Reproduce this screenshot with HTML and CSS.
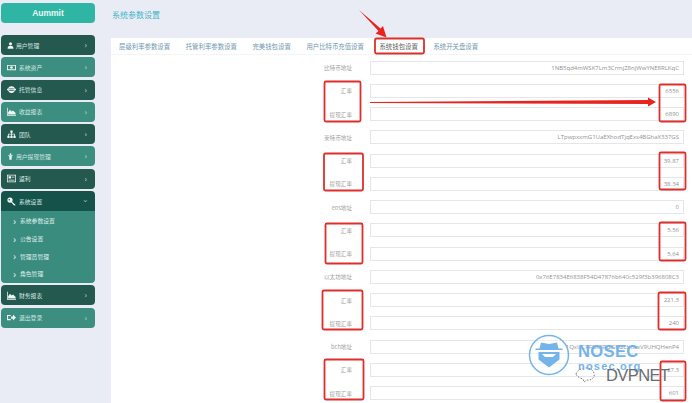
FILE: index.html
```html
<!DOCTYPE html>
<html lang="zh">
<head>
<meta charset="utf-8">
<title>系统参数设置</title>
<link rel="stylesheet" href="styles.css">
</head>
<body>
<div class="page">
  <aside class="sidebar">
    <div class="logo">Aummit</div>
    <nav class="menu">
      <a class="item dark"><svg class="ico narrow" viewBox="0 0 12 12"><circle cx="6" cy="3.2" r="2.6"/><path d="M1 11.5c0-4 2-5 5-5s5 1 5 5z"/></svg><span class="lbl">用户管理</span><span class="chev">›</span></a>
      <a class="item light"><svg class="ico" viewBox="0 0 12 12"><path d="M0 2.5h12v7H0zM1.2 3.7v4.6h9.600V3.700z" fill-rule="evenodd"/><circle cx="6" cy="6" r="1.800"/></svg><span class="lbl">系统资产</span><span class="chev">›</span></a>
      <a class="item dark"><svg class="ico" viewBox="0 0 12 12"><path d="M6 1.500a4.500 4.500 0 1 0 0 9 4.500 4.500 0 0 0 0-9zM3 4.500h6v1H3zM3 6.500h6v1H3z" fill-rule="evenodd"/><path d="M0 5h2v2H0zM10 5h2v2h-2z"/></svg><span class="lbl">托管信息</span><span class="chev">›</span></a>
      <a class="item light"><svg class="ico" viewBox="0 0 12 12"><path d="M0 1h1v9.500h11V11.500H0zM1.500 10V7l2.500-3.500L6 6l2-1.500L11.500 8v2z"/></svg><span class="lbl">收益报表</span><span class="chev">›</span></a>
      <a class="item dark"><svg class="ico" viewBox="0 0 12 12"><path d="M4.500 0.500h3v3h-1v1.500h4v2.500h1v3h-3v-3h1V6h-3v1.500h1v3h-3v-3h1V6h-3v1.500h1v3h-3v-3h1V5h4V3.500h-1z"/></svg><span class="lbl">团队</span><span class="chev">›</span></a>
      <a class="item light"><svg class="ico narrow" viewBox="0 0 12 12"><circle cx="6" cy="2" r="1.500"/><path d="M1.500 4h9L8 6v5.500H4V6z"/></svg><span class="lbl">用户提现管理</span><span class="chev">›</span></a>
      <a class="item dark"><svg class="ico" viewBox="0 0 12 12"><path d="M0 1h12v10H0zM1 2v8h10V2z" fill-rule="evenodd"/><path d="M2 3h3.500v3H2zM6.500 3.500H10v1H6.500zM2 7.500h8v1H2z"/></svg><span class="lbl">返利</span><span class="chev">›</span></a>
      <div class="group">
        <a class="item active"><svg class="ico" viewBox="0 0 12 12"><path d="M4 .5a3.500 3.500 0 1 0 0 7 3.500 3.500 0 0 0 0-7zM3 2.500a1 1 0 1 1 0 2 1 1 0 0 1 0-2z" fill-rule="evenodd"/><path d="M6.500 6l5 4.500-1 1L9.500 10.500l-1 .5-.5-1.500-2.500-2.500z"/></svg><span class="lbl">系统设置</span><span class="chev down">›</span></a>
        <div class="sub">
          <a class="subitem"><span class="arrow">›</span>系统参数设置</a>
          <a class="subitem"><span class="arrow">›</span>公告设置</a>
          <a class="subitem"><span class="arrow">›</span>管理员管理</a>
          <a class="subitem"><span class="arrow">›</span>角色管理</a>
        </div>
      </div>
      <a class="item dark"><svg class="ico" viewBox="0 0 12 12"><path d="M0 1h1v9.500h11V11.500H0zM1.500 10V7l2.500-3.500L6 6l2-1.500L11.500 8v2z"/></svg><span class="lbl">财务报表</span><span class="chev">›</span></a>
      <a class="item light"><svg class="ico" viewBox="0 0 12 12"><path d="M0 2.500h5v1.500H1.500v4H5v1.500H0zM5.500 4.500H8V2l4 4-4 4V7.500H5.500z"/></svg><span class="lbl">退出登录</span><span class="chev">›</span></a>
    </nav>
  </aside>
  <main class="main">
    <header class="head">系统参数设置</header>
    <section class="panel">
      <div class="tabs">
        <span class="tab">层级利率参数设置</span>
        <span class="tab">托管利率参数设置</span>
        <span class="tab">完美钱包设置</span>
        <span class="tab">用户比特币充值设置</span>
        <span class="tab current">系统钱包设置</span>
        <span class="tab">系统开关盘设置</span>
      </div>
      <form class="form">
        <label class="label">比特币地址</label><div class="field">1NB5qd4mWSK7Lm3CrmjZ8njWwYNE8RLKqC</div>
        <label class="label">汇率</label><div class="field">6556</div>
        <label class="label">提现汇率</label><div class="field">6890</div>
        <label class="label">莱特币地址</label><div class="field">LTpwpxxmG1UaEXhodTjqExs4BGhaX337GS</div>
        <label class="label">汇率</label><div class="field">39.87</div>
        <label class="label">提现汇率</label><div class="field">38.34</div>
        <label class="label">eos地址</label><div class="field">0</div>
        <label class="label">汇率</label><div class="field">5.56</div>
        <label class="label">提现汇率</label><div class="field">5.64</div>
        <label class="label">以太坊地址</label><div class="field">0x76E7834E6838F54D47876b640c529f3b396808C3</div>
        <label class="label">汇率</label><div class="field">221.3</div>
        <label class="label">提现汇率</label><div class="field">240</div>
        <label class="label">bch地址</label><div class="field">1QxUCRFBxBPGGbGEbfxwV9UHQHenP4</div>
        <label class="label">汇率</label><div class="field">27.3</div>
        <label class="label">提现汇率</label><div class="field">601</div>
      </form>
    </section>
  </main>

  <svg class="marks" viewBox="0 0 692 403">
    <g class="boxes">
      <rect x="375" y="38.500" width="49" height="15" rx="1.500"/>
      <rect x="324.500" y="81.500" width="36" height="40" rx="1.500"/>
      <rect x="659.500" y="84.500" width="26" height="37" rx="1.500"/>
      <rect x="324" y="153.500" width="39" height="37" rx="1.500"/>
      <rect x="659.500" y="152.500" width="26" height="37" rx="1.500"/>
      <rect x="325.500" y="223.500" width="37" height="40" rx="1.500"/>
      <rect x="659.500" y="222.500" width="26" height="38" rx="1.500"/>
      <rect x="322.500" y="290.500" width="40" height="39" rx="1.500"/>
      <rect x="658.500" y="292.500" width="27" height="37" rx="1.500"/>
      <rect x="324.500" y="359.500" width="39" height="40" rx="1.500"/>
      <rect x="660.500" y="361.500" width="25" height="39" rx="1.500"/>
    </g>
    <polygon class="arrow-fill" points="370,102 648,100 648,97.500 656,102 648,106.500 648,104 370,103"/>
    <polygon class="arrow-fill" points="359,10 380.500,28.500 383,26 386.500,37.500 375.500,33.500 378.500,31"/>
    <g class="seal">
      <circle class="seal-ring" cx="549" cy="355" r="19.500"/>
      <path class="seal-fill" d="M541 342.500l8 1.500 8-1.500 1.500 6h4v1.500h-27v-1.500h4zM538.500 352h21v7.500l-10.500 8-10.500-8z"/>
      <path class="seal-gap" d="M542 354h14l-3 3h-8z"/>
    </g>
    <g class="chat">
      <path class="chat-line" d="M576 374c2-6 11-8 16-4 5 5 1 11-5 10l-3 2-1-3c-3-1-6-2-7-5z"/>
    </g>
  </svg>
  <div class="watermark">
    <div class="wm-name">NOSEC</div>
    <div class="wm-site">nosec.org</div>
    <div class="wm-net">DVPNET</div>
  </div>
</div>
</body>
</html>
```

FILE: styles.css
```css
* { box-sizing: border-box; }
html, body { margin: 0; padding: 0; }
body {
  width: 692px;
  height: 403px;
  overflow: hidden;
  background: #e9ecf5;
  font-family: "Noto Sans CJK SC", "Noto Sans", sans-serif;
}
.page { position: relative; display: flex; width: 692px; height: 403px; }

.sidebar { width: 111px; flex: none; padding: 3px 16px 0 1px; }
.logo {
  height: 20px;
  line-height: 20px;
  border-radius: 4px;
  background: #2fb5a4;
  color: #e8f8f5;
  text-align: center;
  font-family: "Liberation Sans", sans-serif;
  font-size: 8.500px;
  font-weight: 700;
}
.menu { display: flex; flex-direction: column; gap: 2.300px; margin-top: 12px; }
.item {
  display: flex;
  align-items: center;
  height: 20px;
  padding: 0 8px 0 6px;
  border-radius: 4px;
  color: #d5e6e2;
  font-size: 5.800px;
}
.dark { background: #24594f; }
.light { background: #3b8e80; }
.active { background: #15534a; border-radius: 4px 4px 0 0; }
.ico { width: 9px; height: 9px; flex: none; margin-right: 3px; fill: #eef6f4; }
.narrow { width: 7px; margin-right: 2px; }
.lbl { flex: 1; white-space: nowrap; }
.chev { color: #cfe2dd; font-size: 8px; line-height: 1; }
.down { transform: rotate(90deg); }
.group { display: flex; flex-direction: column; }
.sub {
  display: flex;
  flex-direction: column;
  padding: 1px 0 0;
  height: 72px;
  background: #3a8c7f;
  border-radius: 0 0 4px 4px;
}
.subitem {
  display: flex;
  align-items: center;
  height: 17.700px;
  padding-left: 12px;
  color: #dfeeea;
  font-size: 5.800px;
}
.arrow { width: 7px; font-size: 10px; line-height: 1; color: #f2f8f6; }

.main { flex: 1; display: flex; flex-direction: column; min-width: 0; }
.head {
  flex: none;
  height: 38px;
  padding: 8px 0 0 1px;
  color: #46b4c9;
  font-size: 8px;
  line-height: 14px;
}
.panel { flex: 1; min-height: 0; overflow: hidden; background: #fff; }
.tabs {
  display: flex;
  align-items: center;
  gap: 15.600px;
  height: 17px;
  padding-left: 8px;
  border-bottom: 1px solid #f4f5f7;
}
.tab { color: #6f97b0; font-size: 6.400px; white-space: nowrap; }
.current { color: #5c5f63; }
.form {
  display: grid;
  grid-template-columns: 1fr 314px;
  grid-auto-rows: 14px;
  column-gap: 18px;
  row-gap: 9.270px;
  padding: 5.500px 8px 0 0;
}
.label {
  color: #a3a3a3;
  font-size: 5.600px;
  line-height: 14px;
  padding-top: .5px;
  text-align: right;
}
.field {
  height: 14px;
  line-height: 12px;
  padding-right: 4px;
  border: 1px solid #e4e6ea;
  color: #929292;
  font-family: "Open Sans", "Noto Sans", sans-serif;
  font-size: 6px;
  text-align: right;
  white-space: nowrap;
  overflow: hidden;
}

.marks { position: absolute; left: 0; top: 0; width: 692px; height: 403px; pointer-events: none; }
.boxes rect { fill: none; stroke: #df2f2c; stroke-width: 1.800; }
.arrow-fill { fill: #e8241f; }
.seal-ring { fill: rgba(255,255,255,.35); stroke: #74b4ea; stroke-width: 1.500; }
.seal-fill { fill: #74b4ea; }
.seal-gap { fill: #fff; }
.chat-line { fill: none; stroke: #555; stroke-width: .8; stroke-dasharray: 1.500 1.500; }

.watermark {
  position: absolute;
  left: 578px;
  top: 345px;
  width: 110px;
  height: 37px;
}
.wm-name {
  color: #74b4ea;
  font-family: "Liberation Sans", sans-serif;
  font-size: 16.500px;
  font-weight: 700;
  line-height: 12px;
  letter-spacing: .4px;
}
.wm-site {
  margin-top: 5px;
  color: #74b4ea;
  font-family: "Liberation Sans", sans-serif;
  font-size: 11px;
  font-weight: 700;
  line-height: 8px;
  letter-spacing: 1.200px;
}
.wm-net {
  margin: 0 0 0 28px;
  color: #6a6d70;
  font-family: "Liberation Sans", sans-serif;
  font-size: 16.500px;
  line-height: 10px;
  letter-spacing: -.6px;
}
```
